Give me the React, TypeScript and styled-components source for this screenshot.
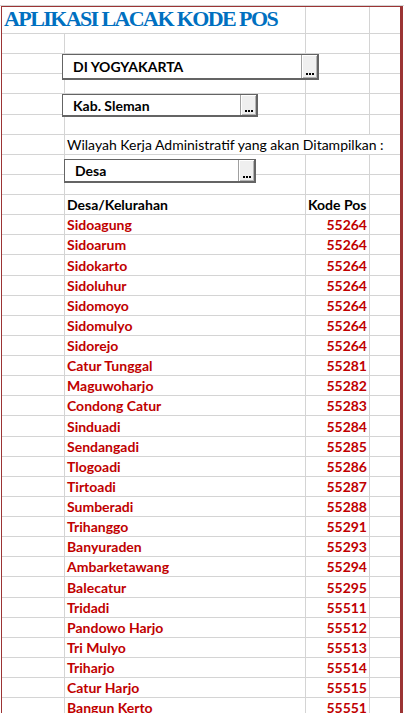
import React from 'react';
import styled, { createGlobalStyle } from 'styled-components';

const GRID = '#d4d4d4';
const FRAME = '#9b3434';
const BODY_FONT = "Lato, 'Open Sans', 'Liberation Sans', sans-serif";

type Entry = { name: string; code: string };

const entries: Entry[] = [
  { name: 'Sidoagung', code: '55264' },
  { name: 'Sidoarum', code: '55264' },
  { name: 'Sidokarto', code: '55264' },
  { name: 'Sidoluhur', code: '55264' },
  { name: 'Sidomoyo', code: '55264' },
  { name: 'Sidomulyo', code: '55264' },
  { name: 'Sidorejo', code: '55264' },
  { name: 'Catur Tunggal', code: '55281' },
  { name: 'Maguwoharjo', code: '55282' },
  { name: 'Condong Catur', code: '55283' },
  { name: 'Sinduadi', code: '55284' },
  { name: 'Sendangadi', code: '55285' },
  { name: 'Tlogoadi', code: '55286' },
  { name: 'Tirtoadi', code: '55287' },
  { name: 'Sumberadi', code: '55288' },
  { name: 'Trihanggo', code: '55291' },
  { name: 'Banyuraden', code: '55293' },
  { name: 'Ambarketawang', code: '55294' },
  { name: 'Balecatur', code: '55295' },
  { name: 'Tridadi', code: '55511' },
  { name: 'Pandowo Harjo', code: '55512' },
  { name: 'Tri Mulyo', code: '55513' },
  { name: 'Triharjo', code: '55514' },
  { name: 'Catur Harjo', code: '55515' },
  { name: 'Bangun Kerto', code: '55551' },
  { name: '', code: '' },
];

const EmptyRow: React.FC = () => (
  <>
    <Cell />
    <Cell />
    <Cell />
    <Cell $edge />
  </>
);

const App: React.FC = () => {
  return (
    <>
      <GlobalStyle />
      <Page>
        <TopRule />
        <Frame>
          <Sheet>
            <TitleCell>APLIKASI LACAK KODE POS</TitleCell>
            <Cell />
            <Cell $edge />

            <EmptyRow />
            <EmptyRow />
            <EmptyRow />
            <EmptyRow />
            <EmptyRow />

            <Cell />
            <Cell $span={3} $edge>
              Wilayah Kerja Administratif yang akan Ditampilkan :
            </Cell>

            <EmptyRow />
            <EmptyRow />

            <Cell />
            <Cell $bold>Desa/Kelurahan</Cell>
            <Cell $bold>Kode Pos</Cell>
            <Cell $edge />

            {entries.map((e, i) => (
              <React.Fragment key={i}>
                <Cell />
                <Cell $bold $red>
                  {e.name}
                </Cell>
                <Cell $bold $red $right>
                  {e.code}
                </Cell>
                <Cell $edge />
              </React.Fragment>
            ))}
          </Sheet>

          <Combo $x={60} $y={47} $w={257} $h={26}>
            <ComboText>DI YOGYAKARTA</ComboText>
            <DropButton>
              <Dots />
            </DropButton>
          </Combo>
          <Combo $x={60} $y={87} $w={196} $h={23}>
            <ComboText>Kab. Sleman</ComboText>
            <DropButton>
              <Dots />
            </DropButton>
          </Combo>
          <Combo $x={62} $y={152} $w={192} $h={24}>
            <ComboText>Desa</ComboText>
            <DropButton>
              <Dots />
            </DropButton>
          </Combo>
        </Frame>
      </Page>
    </>
  );
};

export default App;

const GlobalStyle = createGlobalStyle`
  html, body {
    margin: 0;
    padding: 0;
    background: #ffffff;
    overflow: hidden;
  }
`;

const Page = styled.div`
  height: 100vh;
  overflow: hidden;
  padding-top: 5px;
  box-sizing: border-box;
`;

const TopRule = styled.div`
  border-top: 1px solid ${GRID};
`;

const Frame = styled.div`
  position: relative;
  margin-left: 1px;
  width: 402px;
  box-sizing: border-box;
  border-top: 1px solid ${FRAME};
  border-left: 1px solid ${FRAME};
  border-right: 3px solid ${FRAME};
`;

const Sheet = styled.div`
  display: grid;
  grid-template-columns: 63px 241px 64px 30px;
  grid-template-rows: 27px;
  grid-auto-rows: 20.125px;
  font-family: ${BODY_FONT};
  font-size: 14px;
  color: #000000;
`;

const Cell = styled.div<{
  $span?: number;
  $edge?: boolean;
  $bold?: boolean;
  $red?: boolean;
  $right?: boolean;
}>`
  grid-column: span ${(p) => p.$span ?? 1};
  box-sizing: border-box;
  display: flex;
  align-items: flex-end;
  justify-content: ${(p) => (p.$right ? 'flex-end' : 'flex-start')};
  padding: 0 2px 1px 2px;
  border-bottom: 1px solid ${GRID};
  border-right: ${(p) => (p.$edge ? 'none' : `1px solid ${GRID}`)};
  white-space: nowrap;
  line-height: 17px;
  font-weight: ${(p) => (p.$bold ? 700 : 400)};
  color: ${(p) => (p.$red ? '#c00000' : '#000000')};
`;

const TitleCell = styled.div`
  grid-column: span 2;
  box-sizing: border-box;
  display: flex;
  align-items: flex-end;
  padding: 0 2px 2px 2px;
  border-bottom: 1px solid ${GRID};
  border-right: 1px solid ${GRID};
  white-space: nowrap;
  font-family: 'Liberation Serif', 'DejaVu Serif', serif;
  font-weight: 700;
  font-size: 22px;
  letter-spacing: -1.6px;
  line-height: 24px;
  color: #0070c0;
`;

const Combo = styled.div<{ $x: number; $y: number; $w: number; $h: number }>`
  position: absolute;
  left: ${(p) => p.$x}px;
  top: ${(p) => p.$y}px;
  width: ${(p) => p.$w}px;
  height: ${(p) => p.$h}px;
  box-sizing: border-box;
  display: flex;
  align-items: stretch;
  background: #ffffff;
  border: 1px solid #646464;
  border-right-width: 2px;
  border-bottom-width: 2px;
  font-family: ${BODY_FONT};
  font-weight: 700;
  font-size: 14px;
  color: #000000;
`;

const ComboText = styled.span`
  flex: 1;
  display: flex;
  align-items: center;
  padding-left: 10px;
  white-space: nowrap;
`;

const DropButton = styled.div`
  width: 16px;
  box-sizing: border-box;
  display: flex;
  align-items: flex-end;
  justify-content: center;
  padding-bottom: 3px;
  background: #efefef;
  border-left: 1px solid #a0a0a0;
  box-shadow: inset 1px 1px 0 #ffffff, inset -1px -1px 0 #b4b4b4;
`;

const Dots = styled.span`
  display: block;
  width: 2px;
  height: 2px;
  margin-right: 6px;
  background: #000000;
  box-shadow: 3px 0 0 #000000, 6px 0 0 #000000;
`;
